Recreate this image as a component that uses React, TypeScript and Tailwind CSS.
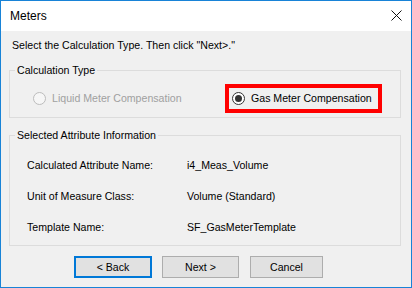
import React from "react";

function Radio({ checked, disabled }: { checked?: boolean; disabled?: boolean }) {
  return (
    <span
      className={
        "w-[13px] h-[13px] rounded-full border shrink-0 flex items-center justify-center " +
        (disabled ? "border-[#bcbcbc] bg-[#f6f6f6]" : "border-[#333333] bg-white")
      }
    >
      {checked && <span className="w-[7px] h-[7px] rounded-full bg-[#333333]" />}
    </span>
  );
}

const ROWS: [string, string][] = [
  ["Calculated Attribute Name:", "i4_Meas_Volume"],
  ["Unit of Measure Class:", "Volume (Standard)"],
  ["Template Name:", "SF_GasMeterTemplate"],
];

export default function App() {
  return (
    <div className="w-[412px] h-[288px] border border-[#1883d7] flex flex-col bg-[#f0f0f0] overflow-hidden font-['Liberation_Sans',Arial,sans-serif] text-[10.6px] leading-[13px] text-black">
      {/* title bar */}
      <div className="h-[30px] bg-white flex items-center justify-between pl-[9px] pr-[9px] shrink-0">
        <span className="text-[12px] text-[#000]">Meters</span>
        <svg width="11" height="11" viewBox="0 0 11 11" className="mt-[-1px]">
          <path d="M0.5 0.5 L10.5 10.5 M10.5 0.5 L0.5 10.5" stroke="#111" strokeWidth="1" />
        </svg>
      </div>

      <div className="flex flex-col">
        <p className="pt-[8px] pl-[11px]">Select the Calculation Type. Then click "Next&gt;."</p>

        {/* calculation type */}
        <fieldset className="mt-[12px] ml-[8px] w-[392px] border border-[#dcdcdc]">
          <legend className="ml-[5px] px-[2px]">Calculation Type</legend>
          <div className="flex items-center mt-[7px] pb-[4px]">
            <div className="ml-[23px] w-[192px] flex items-center gap-[6px] text-[#a0a0a0]">
              <Radio disabled />
              <span>Liquid Meter Compensation</span>
            </div>
            <div className="w-[157px] h-[29px] border-4 border-[#ff0000] pl-[3px] flex items-center gap-[6px]">
              <Radio checked />
              <span>Gas Meter Compensation</span>
            </div>
          </div>
        </fieldset>

        {/* attribute info */}
        <fieldset className="mt-[11px] ml-[8px] w-[392px] border border-[#dcdcdc]">
          <legend className="ml-[5px] px-[2px]">Selected Attribute Information</legend>
          <div className="flex flex-col gap-[18px] mt-[17px] pb-[11px] pl-[17px]">
            {ROWS.map(([k, v]) => (
              <div key={k} className="grid grid-cols-[160px_1fr]">
                <span>{k}</span>
                <span>{v}</span>
              </div>
            ))}
          </div>
        </fieldset>

        {/* buttons */}
        <div className="flex mt-[10px] ml-[73px]">
          <button className="w-[78px] h-[22px] bg-[#e1e1e1] border-2 border-[#0078d7] flex items-center justify-center">
            &lt; Back
          </button>
          <button className="ml-[10px] w-[77px] h-[22px] bg-[#e1e1e1] border border-[#adadad] flex items-center justify-center">
            Next &gt;
          </button>
          <button className="ml-[11px] w-[73px] h-[22px] bg-[#e1e1e1] border border-[#adadad] flex items-center justify-center">
            Cancel
          </button>
        </div>
      </div>
    </div>
  );
}
